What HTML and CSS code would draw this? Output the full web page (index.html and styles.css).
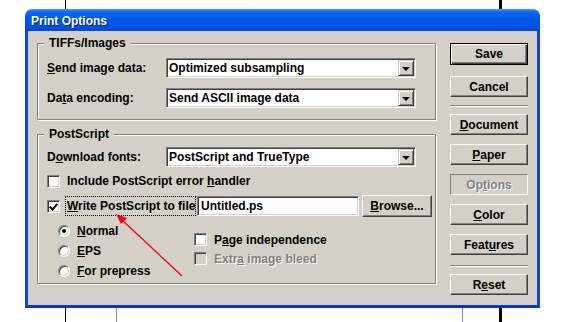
FILE: index.html
```html
<!DOCTYPE html>
<html lang="en">
<head>
    <meta charset="UTF-8">
    <title>Print Options</title>
    <link rel="stylesheet" href="styles.css">
</head>
<body>
    <div class="desk-line line-a"></div>
    <div class="desk-line line-b"></div>
    <div class="desk-line line-c"></div>
    <div class="desk-line line-d"></div>

    <div class="window">
        <div class="titlebar">Print Options</div>
        <div class="client">
            <div class="main">
                <div class="group group-tiff">
                    <span class="group-label">TIFFs/Images</span>
                    <div class="field-row">
                        <span class="field-label"><u>S</u>end image data:</span>
                        <div class="combo"><span>Optimized subsampling</span><i class="drop"></i></div>
                    </div>
                    <div class="field-row">
                        <span class="field-label">Da<u>t</u>a encoding:</span>
                        <div class="combo"><span>Send ASCII image data</span><i class="drop"></i></div>
                    </div>
                </div>

                <div class="group group-post">
                    <span class="group-label">PostScript</span>
                    <div class="field-row">
                        <span class="field-label">D<u>o</u>wnload fonts:</span>
                        <div class="combo"><span>PostScript and TrueType</span><i class="drop"></i></div>
                    </div>
                    <div class="check-row include-row">
                        <i class="check"></i>
                        <span>Include PostScript error <u>h</u>andler</span>
                    </div>
                    <div class="check-row write-row">
                        <i class="check checked"></i>
                        <span class="focus"><u>W</u>rite PostScript to file</span>
                        <div class="textbox">Untitled.ps</div>
                        <div class="btn browse"><span><u>B</u>rowse...</span></div>
                    </div>
                    <div class="lower">
                        <div class="radios">
                            <div class="radio-row"><i class="radio on"></i><span><u>N</u>ormal</span></div>
                            <div class="radio-row"><i class="radio"></i><span><u>E</u>PS</span></div>
                            <div class="radio-row"><i class="radio"></i><span><u>F</u>or prepress</span></div>
                        </div>
                        <div class="checks">
                            <div class="check-row small-row"><i class="check"></i><span>P<u>a</u>ge independence</span></div>
                            <div class="check-row small-row disabled"><i class="check"></i><span>Extr<u>a</u> image bleed</span></div>
                        </div>
                    </div>
                </div>
            </div>

            <div class="side">
                <div class="btn default">Save</div>
                <div class="btn cancel">Cancel</div>
                <div class="sep"></div>
                <div class="btn first"><span><u>D</u>ocument</span></div>
                <div class="btn"><span><u>P</u>aper</span></div>
                <div class="btn pressed"><span>Op<u>t</u>ions</span></div>
                <div class="btn"><span><u>C</u>olor</span></div>
                <div class="btn"><span>Feat<u>u</u>res</span></div>
                <div class="sep sep-low"></div>
                <div class="btn reset"><span>R<u>e</u>set</span></div>
            </div>
        </div>
    </div>

    <svg class="arrow" width="562" height="322" viewBox="0 0 562 322">
        <line x1="182" y1="276" x2="122" y2="220" stroke="#ff0000" stroke-width="1.3"/>
        <polygon points="116,214 127,218 121,224" fill="#ff0000"/>
    </svg>
</body>
</html>
```

FILE: styles.css
```css
body {
    margin: 0;
    width: 562px;
    height: 322px;
    box-sizing: border-box;
    padding: 9px 0 0 25px;
    background: #fff;
    position: relative;
    overflow: hidden;
    font-family: "Liberation Sans", Arial, sans-serif;
    font-size: 12px;
    font-weight: bold;
    color: #000;
}

u {
    text-decoration-thickness: 1px;
    text-underline-offset: 1px;
}

/* things drawn on the page behind the dialog */
.desk-line {
    position: absolute;
    top: 0;
    height: 322px;
    background: #000;
}

.line-a { left: 65px; width: 1px; }
.line-b { left: 499px; width: 3px; }
.line-c { left: 116px; width: 1px; top: 300px; height: 22px; background: #8080ff; }
.line-d { left: 462px; width: 1px; top: 300px; height: 22px; background: #8080ff; }

.window {
    position: relative;
    z-index: 1;
    width: 515px;
    height: 299px;
    display: flex;
    flex-direction: column;
}

.titlebar {
    height: 22px;
    box-sizing: border-box;
    padding: 2px 0 0 6px;
    line-height: 20px;
    border-radius: 7px 7px 0 0;
    background: linear-gradient(#4a9bff 0%, #1268f2 12%, #0058e8 45%, #0052e0 80%, #0846d4 100%);
    color: #fff;
    text-shadow: 1px 1px #0a1c78;
}

.client {
    flex: 1;
    display: flex;
    gap: 14px;
    padding: 12px 9px 0 9px;
    background: #d4d0c8;
    border: 3px solid #0a47d8;
    border-top: 0;
    border-bottom-color: #0838c8;
}

.main {
    width: 399px;
}

.group {
    position: relative;
    box-sizing: border-box;
    border: 1px solid #808080;
    box-shadow: inset 1px 1px #fff, 1px 1px #fff;
    padding-left: 9px;
}

.group-label {
    position: absolute;
    top: -8px;
    left: 6px;
    padding: 0 5px;
    line-height: 14px;
    background: #d4d0c8;
}

.group-tiff {
    height: 77px;
    padding-top: 14px;
}

.group-tiff .field-row + .field-row {
    margin-top: 10px;
}

.group-post {
    height: 150px;
    margin-top: 14px;
    padding-top: 12px;
}

.field-row {
    display: flex;
    align-items: center;
    height: 20px;
}

.field-label {
    width: 119px;
}

.combo {
    width: 250px;
    height: 20px;
    box-sizing: border-box;
    display: flex;
    align-items: center;
    padding-left: 2px;
    background: #fff;
    border: 1px solid;
    border-color: #808080 #fff #fff #808080;
    box-shadow: inset 1px 1px #404040, inset -1px -1px #d4d0c8;
}

.drop {
    margin-left: auto;
    margin-right: 1px;
    width: 16px;
    height: 16px;
    box-sizing: border-box;
    display: flex;
    align-items: center;
    justify-content: center;
    background: #d4d0c8;
    border: 1px solid;
    border-color: #d4d0c8 #404040 #404040 #d4d0c8;
    box-shadow: inset 1px 1px #fff, inset -1px -1px #808080;
}

.drop::after {
    content: "";
    border-top: 4px solid #000;
    border-left: 4px solid transparent;
    border-right: 4px solid transparent;
    margin-top: 1px;
}

.check-row {
    display: flex;
    align-items: center;
}

.check {
    width: 13px;
    height: 13px;
    box-sizing: border-box;
    margin-right: 7px;
    background: #fff;
    border: 1px solid;
    border-color: #808080 #fff #fff #808080;
    box-shadow: inset 1px 1px #404040, inset -1px -1px #d4d0c8;
    position: relative;
}

.check.checked::after {
    content: "";
    position: absolute;
    left: 3px;
    top: 1px;
    width: 3px;
    height: 6px;
    border: solid #000;
    border-width: 0 2px 2px 0;
    transform: rotate(40deg);
}

.include-row {
    height: 16px;
    margin-top: 6px;
}

.write-row {
    height: 22px;
    margin-top: 6px;
}

.write-row .check {
    margin-right: 5px;
}

.focus {
    width: 131px;
    box-sizing: border-box;
    padding: 2px 0 2px 1px;
    border: 1px dotted #000;
    white-space: nowrap;
    overflow: hidden;
}

.textbox {
    width: 162px;
    height: 20px;
    box-sizing: border-box;
    margin-left: 1px;
    padding-left: 3px;
    line-height: 18px;
    background: #fff;
    border: 1px solid;
    border-color: #808080 #fff #fff #808080;
    box-shadow: inset 1px 1px #404040, inset -1px -1px #d4d0c8;
}

.lower {
    display: flex;
    margin-top: 4px;
}

.radios {
    width: 136px;
    margin-left: 11px;
}

.radio-row {
    display: flex;
    align-items: center;
    height: 20px;
}

.radio {
    width: 12px;
    height: 12px;
    box-sizing: border-box;
    margin-right: 7px;
    border-radius: 50%;
    background: #fff;
    border: 1px solid;
    border-color: #808080 #fff #fff #808080;
    box-shadow: inset 1px 1px #404040, inset -1px -1px #d4d0c8;
    display: flex;
    align-items: center;
    justify-content: center;
}

.radio.on::after {
    content: "";
    width: 4px;
    height: 4px;
    border-radius: 50%;
    background: #000;
}

.checks {
    margin-top: 9px;
}

.small-row {
    height: 19px;
}

.disabled {
    color: #808080;
    text-shadow: 1px 1px #fff;
}

.disabled .check {
    background: #d4d0c8;
}

/* buttons */
.side {
    width: 78px;
    display: flex;
    flex-direction: column;
}

.btn {
    height: 21px;
    box-sizing: border-box;
    display: flex;
    align-items: center;
    justify-content: center;
    background: #d4d0c8;
    border: 1px solid;
    border-color: #fff #404040 #404040 #fff;
    box-shadow: inset -1px -1px #808080;
    margin-top: 9px;
}

.btn.default {
    height: 22px;
    margin-top: 0;
    border: 1px solid #000;
    box-shadow: inset 1px 1px #fff, inset -1px -1px #404040, inset -2px -2px #808080;
}

.btn.cancel { margin-top: 11px; }
.btn.first { margin-top: 7px; }
.btn.reset { margin-top: 7px; }

.btn.pressed {
    border-color: #808080 #fff #fff #808080;
    box-shadow: none;
    color: #808080;
    text-shadow: 1px 1px #fff;
}

.sep {
    height: 1px;
    margin-top: 8px;
    background: #808080;
    border-bottom: 1px solid #fff;
}

.sep-low { margin-top: 10px; }

.browse {
    width: 70px;
    height: 22px;
    margin-top: 0;
    margin-left: 3px;
}

.arrow {
    position: absolute;
    left: 0;
    top: 0;
    z-index: 2;
    pointer-events: none;
}
```
